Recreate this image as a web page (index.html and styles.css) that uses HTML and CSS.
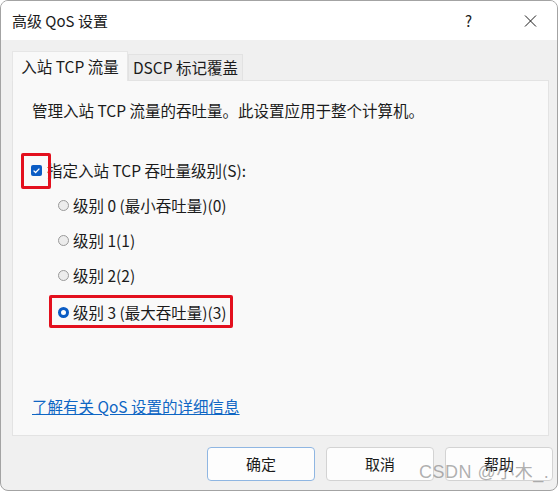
FILE: index.html
```html
<!DOCTYPE html>
<html>
<head>
<meta charset="utf-8">
<title>高级 QoS 设置</title>
<link rel="stylesheet" href="styles.css">
</head>
<body>
    <div class="window">
        <div class="titlebar">
            <span class="title">高级 QoS 设置</span>
            <span class="help">?</span>
            <span class="close">
                <svg width="13" height="12" viewBox="0 0 13 12"><path d="M1 0.5 L12 11.5 M12 0.5 L1 11.5" stroke="#1b1b1b" stroke-width="1" fill="none"/></svg>
            </span>
        </div>
        <div class="main">
            <div class="tabs">
                <div class="tab active">入站 TCP 流量</div>
                <div class="tab">DSCP 标记覆盖</div>
            </div>
            <div class="panel">
                <p class="desc">管理入站 TCP 流量的吞吐量。此设置应用于整个计算机。</p>
                <div class="check_row">
                    <span class="checkbox marked">
                        <svg width="11" height="11" viewBox="0 0 11 11"><path d="M2.6 5.6 L4.6 7.5 L8.4 3.6" stroke="#fff" stroke-width="1.3" fill="none"/></svg>
                    </span>
                    <span class="label">指定入站 TCP 吞吐量级别(S):</span>
                </div>
                <ul class="radios">
                    <li><span class="radio"></span>级别 0 (最小吞吐量)(0)</li>
                    <li><span class="radio"></span>级别 1(1)</li>
                    <li><span class="radio"></span>级别 2(2)</li>
                    <li class="selected marked_row"><span class="radio on"></span>级别 3 (最大吞吐量)(3)</li>
                </ul>
                <a href="javascript:;" class="link">了解有关 QoS 设置的详细信息</a>
            </div>
            <div class="buttons">
                <a href="javascript:;" class="btn default">确定</a>
                <a href="javascript:;" class="btn">取消</a>
                <a href="javascript:;" class="btn">帮助</a>
            </div>
        </div>
        <div class="watermark">CSDN @小木_.</div>
    </div>
</body>
</html>
```

FILE: styles.css
```css
*{ margin: 0; padding: 0; list-style: none; box-sizing: border-box;}
body{ background: #fff; font-family: "Noto Sans CJK SC", "Microsoft YaHei", sans-serif; font-size: 15px; color: #1b1b1b;}

.window{ position: relative; width: 558px; height: 491px; border: 1px solid #a3a3a3; border-radius: 8px; overflow: hidden; background: #f0f0f0; display: flex; flex-direction: column;}

.titlebar{ height: 39px; background: #fff; display: flex; align-items: center; padding-left: 11px;}
.titlebar .title{ flex: 1; font-size: 15px; line-height: 20px;}
.titlebar .help{ width: 12px; font-size: 15px; line-height: 20px; margin-right: 47px;}
.titlebar .close{ width: 13px; height: 12px; margin-right: 20px; display: flex;}

.main{ flex: 1; display: flex; flex-direction: column; padding: 11px 8px 0 11px;}

.tabs{ display: flex; align-items: flex-end; height: 29px;}
.tab{ height: 26px; line-height: 24px; width: 115px; background: #ececec; border: 1px solid #e2e2e2; border-bottom: none; text-align: center; white-space: nowrap; font-size: 15.5px;}
.tab.active{ height: 30px; line-height: 28px; width: 116px; background: #f9f9f9; border-color: #e6e6e6; margin-bottom: -1px; position: relative; z-index: 1;}

.panel{ height: 356px; background: #f9f9f9; border: 1px solid #e3e3e3; padding: 19px 10px 19px 19px; display: flex; flex-direction: column;}
.desc{ line-height: 20px; font-size: 15.5px;}

.check_row{ display: flex; align-items: center; margin-top: 40px; line-height: 20px;}
.checkbox{ position: relative; width: 11px; height: 11px; border-radius: 2px; background: #0b5cc4; display: flex; margin-left: -1px;}
.checkbox.marked::after{ content: ""; position: absolute; top: -12px; left: -10px; right: -9px; bottom: -13px; border: 3px solid #e3101e; border-radius: 2px;}
.check_row .label{ margin-left: 5px; font-size: 15.5px;}

.radios{ margin-left: 26px;}
.radios li{ display: flex; width: fit-content; align-items: center; line-height: 20px; margin-top: 15px; font-size: 15.5px;}
.radios li.selected{ margin-top: 10px;}
.radio{ width: 11px; height: 11px; border-radius: 50%; border: 1px solid #9a9a9a; background: #ececec; margin-right: 4px;}
.radio.on{ border: 3px solid #0b5cc4; background: #fff;}
.marked_row{ border: 3px solid #e3101e; border-radius: 2px; padding: 4px 3px 3px 6px; margin-left: -9px;}

.link{ margin-top: auto; line-height: 20px; color: #0f66c4; text-decoration: underline; align-self: flex-start; font-size: 15.5px;}

.buttons{ display: flex; justify-content: flex-end; gap: 11px; margin-top: 11px; margin-right: -4px;}
.btn{ width: 108px; height: 34px; line-height: 32px; text-align: center; background: #fdfdfd; border: 1px solid #d3d3d3; border-radius: 4px; color: #1b1b1b; text-decoration: none;}
.btn.default{ border-color: #8fb6e2;}

.watermark{ position: absolute; left: 418px; top: 460px; font-family: "Liberation Sans", "Noto Sans CJK SC", sans-serif; font-size: 18px; line-height: 22px; color: rgba(110, 110, 110, 0.55); letter-spacing: 0.5px;}
```
